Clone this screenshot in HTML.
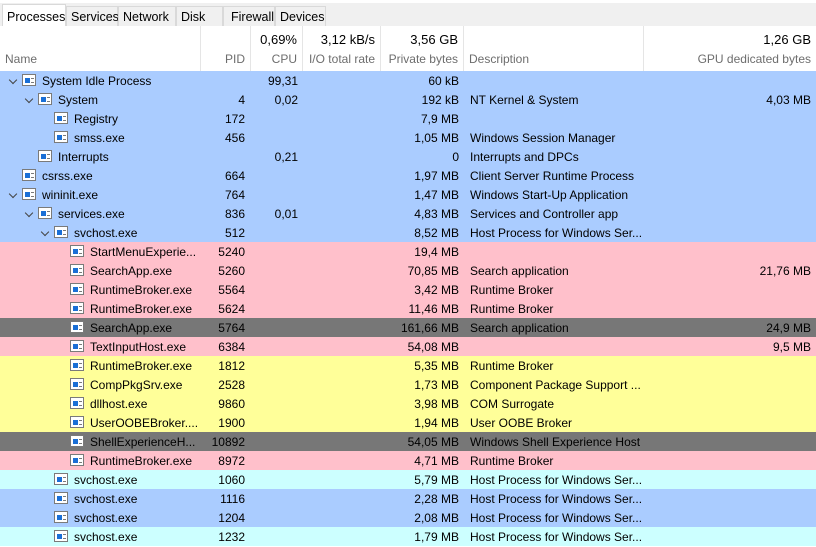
<!DOCTYPE html><html><head><style>
body{margin:0;width:816px;height:546px;overflow:hidden;background:#fff;font-family:"Liberation Sans",sans-serif;font-size:12px;color:#000;position:relative}
.tabs{position:absolute;top:0;left:0;width:816px;height:26px;background:#f0f0f0;border-top:3px solid #fff;box-sizing:border-box}
.tab{position:absolute;top:3px;height:20px;line-height:20px;border:1px solid #d9d9d9;border-bottom:none;background:#f0f0f0;padding-left:4px;box-sizing:border-box;font-size:12.5px}
.tab.a{background:#fff;top:1px;height:25px;line-height:24px;border-color:#d9d9d9}
.hdr{position:absolute;top:26px;left:0;width:816px;height:45px;background:#fff}
.hc{position:absolute;top:0;height:45px;border-right:1px solid #e5e5e5;box-sizing:border-box}
.t1{position:absolute;top:6px;right:5px;font-size:13px}
.t2{position:absolute;top:26px;right:5px;color:#6d6d6d}
.t2l{position:absolute;top:26px;left:5px;color:#6d6d6d}
.row{position:absolute;left:0;width:816px;height:19px;line-height:20px}
.row span{position:absolute;top:0;white-space:nowrap}
.r{text-align:right}
.ic{position:absolute;top:3px;width:14px;height:12px;border:1px solid #7a7a7a;background:#fff;box-sizing:border-box}
.ic:before{content:"";position:absolute;left:2px;top:3px;width:5px;height:5px;background:#1a6fd6}
.ic:after{content:"";position:absolute;left:8px;top:3px;width:3px;height:5px;border-top:1px solid #7a7a7a;border-bottom:1px solid #7a7a7a;box-sizing:border-box}
.ch{position:absolute;top:6px;width:5px;height:5px;border-right:1.5px solid #444;border-bottom:1.5px solid #444;transform:rotate(45deg)}
.B{background:#aaccff}.P{background:#ffc0cb}.Y{background:#ffff99}.C{background:#ccffff}.G{background:#777}
</style></head><body>
<div class="tabs">
<div class="tab a" style="left:2px;width:64px">Processes</div>
<div class="tab" style="left:66px;width:52px">Services</div>
<div class="tab" style="left:118px;width:58px">Network</div>
<div class="tab" style="left:176px;width:47px">Disk</div>
<div class="tab" style="left:223px;width:52px;padding-left:7px">Firewall</div>
<div class="tab" style="left:275px;width:51px">Devices</div>
</div>
<div class="hdr">
<div class="hc" style="left:0;width:201px"><span class="t2l">Name</span></div>
<div class="hc" style="left:201px;width:50px"><span class="t2">PID</span></div>
<div class="hc" style="left:251px;width:52px"><span class="t1">0,69%</span><span class="t2">CPU</span></div>
<div class="hc" style="left:303px;width:78px"><span class="t1">3,12 kB/s</span><span class="t2">I/O total rate</span></div>
<div class="hc" style="left:381px;width:83px"><span class="t1">3,56 GB</span><span class="t2">Private bytes</span></div>
<div class="hc" style="left:464px;width:180px"><span class="t2l">Description</span></div>
<div class="hc" style="left:644px;width:172px;border:none"><span class="t1">1,26 GB</span><span class="t2">GPU dedicated bytes</span></div>
</div>
<div id="rows"></div>
<script>
var d=[
["B",0,1,"System Idle Process","","99,31","60 kB","",""],
["B",1,1,"System","4","0,02","192 kB","NT Kernel &amp; System","4,03 MB"],
["B",2,0,"Registry","172","","7,9 MB","",""],
["B",2,0,"smss.exe","456","","1,05 MB","Windows Session Manager",""],
["B",1,0,"Interrupts","","0,21","0","Interrupts and DPCs",""],
["B",0,0,"csrss.exe","664","","1,97 MB","Client Server Runtime Process",""],
["B",0,1,"wininit.exe","764","","1,47 MB","Windows Start-Up Application",""],
["B",1,1,"services.exe","836","0,01","4,83 MB","Services and Controller app",""],
["B",2,1,"svchost.exe","512","","8,52 MB","Host Process for Windows Ser...",""],
["P",3,0,"StartMenuExperie...","5240","","19,4 MB","",""],
["P",3,0,"SearchApp.exe","5260","","70,85 MB","Search application","21,76 MB"],
["P",3,0,"RuntimeBroker.exe","5564","","3,42 MB","Runtime Broker",""],
["P",3,0,"RuntimeBroker.exe","5624","","11,46 MB","Runtime Broker",""],
["G",3,0,"SearchApp.exe","5764","","161,66 MB","Search application","24,9 MB"],
["P",3,0,"TextInputHost.exe","6384","","54,08 MB","","9,5 MB"],
["Y",3,0,"RuntimeBroker.exe","1812","","5,35 MB","Runtime Broker",""],
["Y",3,0,"CompPkgSrv.exe","2528","","1,73 MB","Component Package Support ...",""],
["Y",3,0,"dllhost.exe","9860","","3,98 MB","COM Surrogate",""],
["Y",3,0,"UserOOBEBroker....","1900","","1,94 MB","User OOBE Broker",""],
["G",3,0,"ShellExperienceH...","10892","","54,05 MB","Windows Shell Experience Host",""],
["P",3,0,"RuntimeBroker.exe","8972","","4,71 MB","Runtime Broker",""],
["C",2,0,"svchost.exe","1060","","5,79 MB","Host Process for Windows Ser...",""],
["B",2,0,"svchost.exe","1116","","2,28 MB","Host Process for Windows Ser...",""],
["B",2,0,"svchost.exe","1204","","2,08 MB","Host Process for Windows Ser...",""],
["C",2,0,"svchost.exe","1232","","1,79 MB","Host Process for Windows Ser...",""]];
var h="";d.forEach(function(r,i){var y=71+i*19,x=r[1]*16;
h+='<div class="row '+r[0]+'" style="top:'+y+'px">'+(r[2]?'<div class="ch" style="left:'+(x+10)+'px"></div>':'')+
'<div class="ic" style="left:'+(x+22)+'px"></div><span style="left:'+(x+42)+'px">'+r[3]+'</span>'+
'<span class="r" style="right:571px">'+r[4]+'</span><span class="r" style="right:518px">'+r[5]+'</span>'+
'<span class="r" style="right:357px">'+r[6]+'</span><span style="left:470px">'+r[7]+'</span><span class="r" style="right:5px">'+r[8]+'</span></div>';});
document.getElementById("rows").innerHTML=h;
</script>
</body></html>
